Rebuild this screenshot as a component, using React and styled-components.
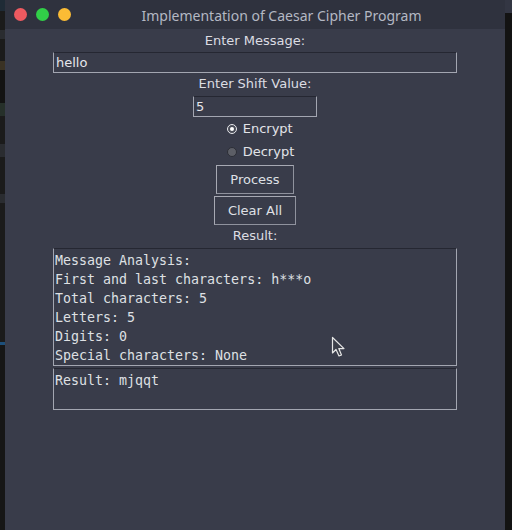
import React, { useState } from 'react'
import styled, { createGlobalStyle } from 'styled-components'

const UI = '"DejaVu Sans", "Noto Sans", sans-serif'
const MONO = '"DejaVu Sans Mono", "Liberation Mono", monospace'

const Global = createGlobalStyle`
  html, body {
    margin: 0;
    padding: 0;
    background: #141414;
  }
  * {
    box-sizing: border-box;
  }
`

const Screen = styled.div`
  position: relative;
  width: 512px;
  height: 530px;
  display: flex;
  overflow: hidden;
`

const EditorEdge = styled.div`
  width: ${p => p.w}px;
  flex-shrink: 0;
  background: #1b1b1b;
  display: flex;
  flex-direction: column;
`

const EdgeBit = styled.div`
  height: ${p => p.h}px;
  background: ${p => p.c};
`

const Window = styled.div`
  width: 500px;
  flex-shrink: 0;
  display: flex;
  flex-direction: column;
  background: #393c4a;
`

const TitleBar = styled.div`
  height: 29px;
  flex-shrink: 0;
  background: #2f323e;
  display: flex;
  align-items: center;
  padding-left: 9px;
`

const Light = styled.span`
  width: 13px;
  height: 13px;
  border-radius: 50%;
  background: ${p => p.color};
  margin-right: 9px;
  flex-shrink: 0;
`

const Title = styled.div`
  flex: 1;
  text-align: center;
  font-family: "Noto Sans", ${UI};
  font-size: 14px;
  color: #b4b8c3;
  padding-right: 12px;
  margin-left: -10px;
  margin-top: 2px;
`

const Body = styled.div`
  flex: 1;
  display: flex;
  flex-direction: column;
  align-items: center;
  padding-top: 3px;
`

const Label = styled.div`
  font-family: ${UI};
  font-size: 13px;
  line-height: 18px;
  color: #dcdde3;
  margin-top: ${p => p.top || 0}px;
  margin-bottom: ${p => p.gap || 2}px;
`

const Entry = styled.input`
  width: ${p => p.w}px;
  height: 21px;
  background: #393c4a;
  border: 1px solid #a3a6b1;
  border-top-color: #252732;
  outline: none;
  padding: 0 2px;
  font-family: ${UI};
  font-size: 13px;
  color: #e6e6ea;
  margin-bottom: ${p => p.gap}px;
`

const RadioGroup = styled.div`
  display: flex;
  flex-direction: column;
  align-items: flex-start;
  padding-left: 11px;
`

const RadioRow = styled.label`
  height: 23px;
  display: flex;
  align-items: center;
  gap: 6px;
  font-family: ${UI};
  font-size: 13px;
  color: #e2e3e8;
  cursor: default;
`

const Dot = styled.span`
  width: 10px;
  height: 10px;
  border-radius: 50%;
  display: flex;
  align-items: center;
  justify-content: center;
  border: 1px solid ${p => (p.on ? '#e8e8ec' : '#2c2e36')};
  background: ${p => (p.on ? '#4a4d58' : '#5c5e66')};
  &::after {
    content: '';
    width: 4px;
    height: 4px;
    border-radius: 50%;
    background: ${p => (p.on ? '#ffffff' : 'transparent')};
  }
`

const Button = styled.button`
  height: 29px;
  padding: 0 13px;
  margin-top: 2px;
  background: #393c4a;
  border: 1px solid #a7a9b3;
  border-right-color: #8f929d;
  border-bottom-color: #8f929d;
  font-family: ${UI};
  font-size: 13px;
  color: #dfe0e5;
`

const TextBox = styled.div`
  width: 404px;
  height: ${p => p.h}px;
  border: 1px solid #a3a6b1;
  border-top-color: #252732;
  padding: 2px 1px 0;
  margin-bottom: 2px;
  font-family: ${MONO};
  font-size: 13.3px;
  line-height: 19px;
  color: #dfe0e4;
  white-space: pre;
`

const Pointer = styled.svg`
  position: absolute;
  left: 331px;
  top: 336px;
`

const analysis = [
  'Message Analysis:',
  'First and last characters: h***o',
  'Total characters: 5',
  'Letters: 5',
  'Digits: 0',
  'Special characters: None',
]

export default function App() {
  const [mode, setMode] = useState('encrypt')
  return (
    <Screen>
      <Global />
      <EditorEdge w={5}>
        <EdgeBit h={12} c="#1f2b36" />
        <EdgeBit h={20} c="#1b1b1b" />
        <EdgeBit h={10} c="#2a2c30" />
        <EdgeBit h={24} c="#1b1b1b" />
        <EdgeBit h={10} c="#3a3224" />
        <EdgeBit h={36} c="#131313" />
        <EdgeBit h={14} c="#26302a" />
        <EdgeBit h={30} c="#1b1b1b" />
        <EdgeBit h={14} c="#2a2c30" />
        <EdgeBit h={40} c="#1b1b1b" />
        <EdgeBit h={10} c="#2a2c30" />
        <EdgeBit h={150} c="#1b1b1b" />
        <EdgeBit h={4} c="#1d4f7a" />
        <EdgeBit h={200} c="#161616" />
      </EditorEdge>
      <Window>
        <TitleBar>
          <Light color="#ee5a60" />
          <Light color="#31cf48" />
          <Light color="#fbbc35" />
          <Title>Implementation of Caesar Cipher Program</Title>
        </TitleBar>
        <Body>
          <Label>Enter Message:</Label>
          <Entry w={404} gap={2} defaultValue="hello" />
          <Label gap={3}>Enter Shift Value:</Label>
          <Entry w={124} gap={0} defaultValue="5" />
          <RadioGroup>
            <RadioRow onClick={() => setMode('encrypt')}>
              <Dot on={mode === 'encrypt'} />
              Encrypt
            </RadioRow>
            <RadioRow onClick={() => setMode('decrypt')}>
              <Dot on={mode === 'decrypt'} />
              Decrypt
            </RadioRow>
          </RadioGroup>
          <Button>Process</Button>
          <Button>Clear All</Button>
          <Label top={2} gap={3}>Result:</Label>
          <TextBox h={118}>{analysis.join('\n')}</TextBox>
          <TextBox h={42}>Result: mjqqt</TextBox>
        </Body>
      </Window>
      <EditorEdge w={7}>
        <EdgeBit h={13} c="#333643" />
        <EdgeBit h={517} c="#131313" />
      </EditorEdge>
      <Pointer width="16" height="22" viewBox="0 0 16 22">
        <path d="M1.5 1.5 L1.5 17 L5 13.5 L8 20 L10.5 19 L7.8 12.6 L13 12.6 Z" fill="#3c3f4a" stroke="#e6e6e6" strokeWidth="1.2" strokeLinejoin="round" />
      </Pointer>
    </Screen>
  )
}
